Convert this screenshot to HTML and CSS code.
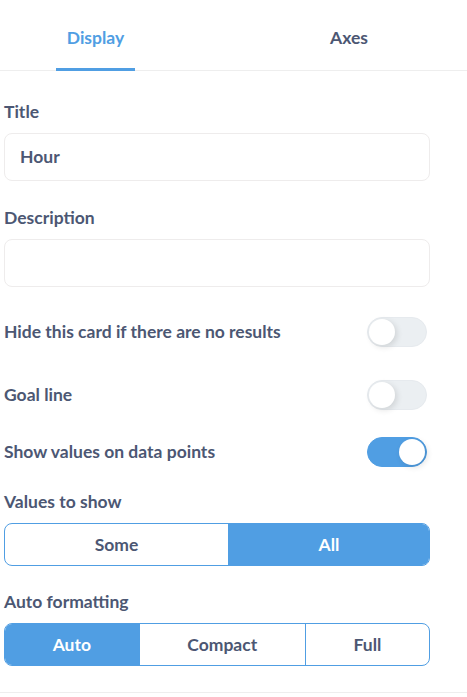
FILE: index.html
```html
<!DOCTYPE html>
<html lang="en">
<head>
    <meta charset="UTF-8">
    <meta name="viewport" content="width=device-width, initial-scale=1.0">
    <title>Chart Settings</title>
    <link rel="stylesheet" href="styles.css">
</head>
<body>

<div class="tabs">
    <div class="tab tab-active">Display</div>
    <div class="tab tab-axes">Axes</div>
</div>

<div class="settings">
    <div class="field">
        <label class="field-label">Title</label>
        <div class="text-input">Hour</div>
    </div>
    <div class="field">
        <label class="field-label">Description</label>
        <div class="text-input"></div>
    </div>

    <div class="toggle-row row-hide">
        <span class="field-label">Hide this card if there are no results</span>
        <span class="toggle"><span class="knob"></span></span>
    </div>
    <div class="toggle-row row-goal">
        <span class="field-label">Goal line</span>
        <span class="toggle"><span class="knob"></span></span>
    </div>
    <div class="toggle-row row-values">
        <span class="field-label">Show values on data points</span>
        <span class="toggle toggle-on"><span class="knob"></span></span>
    </div>

    <div class="field field-seg">
        <label class="field-label">Values to show</label>
        <div class="segmented">
            <div class="seg">Some</div>
            <div class="seg seg-active">All</div>
        </div>
    </div>
    <div class="field field-seg">
        <label class="field-label">Auto formatting</label>
        <div class="segmented">
            <div class="seg seg-active">Auto</div>
            <div class="seg">Compact</div>
            <div class="seg">Full</div>
        </div>
    </div>
</div>

</body>
</html>
```

FILE: styles.css
```css
body {
    font-family: Lato, "Noto Sans", sans-serif;
    font-weight: 700;
    font-size: 17.5px;
    color: #4c5773;
    background-color: #fff;
    margin: 0;
    padding: 0;
}
.tabs {
    display: flex;
    height: 71px;
    border-bottom: 1px solid #eeeeee;
    padding-left: 56px;
    box-sizing: border-box;
}
.tab {
    height: 71px;
    box-sizing: border-box;
    padding: 26px 0 0;
    text-align: center;
    line-height: 24px;
}
.tab-active {
    width: 79px;
    color: #509ee3;
    border-bottom: 3px solid #509ee3;
}
.tab-axes {
    width: 60px;
    margin-left: 184px;
}
.settings {
    padding: 0 37px 26px 4px;
    border-bottom: 1px solid #eeeeee;
}
.field-label {
    display: block;
    line-height: 22px;
}
.field {
    padding-top: 30px;
}
.field + .field {
    padding-top: 26px;
}
.field .field-label {
    margin-bottom: 10px;
}
.text-input {
    height: 48px;
    box-sizing: border-box;
    border: 1px solid #eeecec;
    border-radius: 8px;
    padding: 0 15px;
    line-height: 46px;
}
.toggle-row {
    display: flex;
    justify-content: space-between;
    align-items: center;
    padding-right: 3px;
}
.row-hide {
    margin-top: 30px;
}
.row-goal {
    margin-top: 33px;
}
.row-values {
    margin-top: 27px;
}
.toggle {
    position: relative;
    width: 60px;
    height: 30px;
    box-sizing: border-box;
    border-radius: 15px;
    background-color: #ebeff2;
    border: 1px solid #e6eaee;
}
.toggle .knob {
    position: absolute;
    top: 1px;
    left: 1px;
    width: 26px;
    height: 26px;
    border-radius: 50%;
    background-color: #fff;
    box-shadow: 2px 2px 6px rgba(0, 0, 0, 0.12);
}
.toggle-on {
    background-color: #509ee3;
    border-color: #509ee3;
}
.toggle-on .knob {
    left: auto;
    right: 1px;
}
.field-seg {
    padding-top: 24px;
}
.field-seg + .field-seg {
    padding-top: 25px;
}
.segmented {
    display: flex;
    height: 43px;
    border: 1px solid #509ee3;
    border-radius: 8px;
    overflow: hidden;
    box-sizing: border-box;
}
.seg {
    flex: auto;
    text-align: center;
    line-height: 41px;
}
.seg + .seg {
    border-left: 1px solid #509ee3;
}
.seg-active {
    background-color: #509ee3;
    color: #fff;
}
```
